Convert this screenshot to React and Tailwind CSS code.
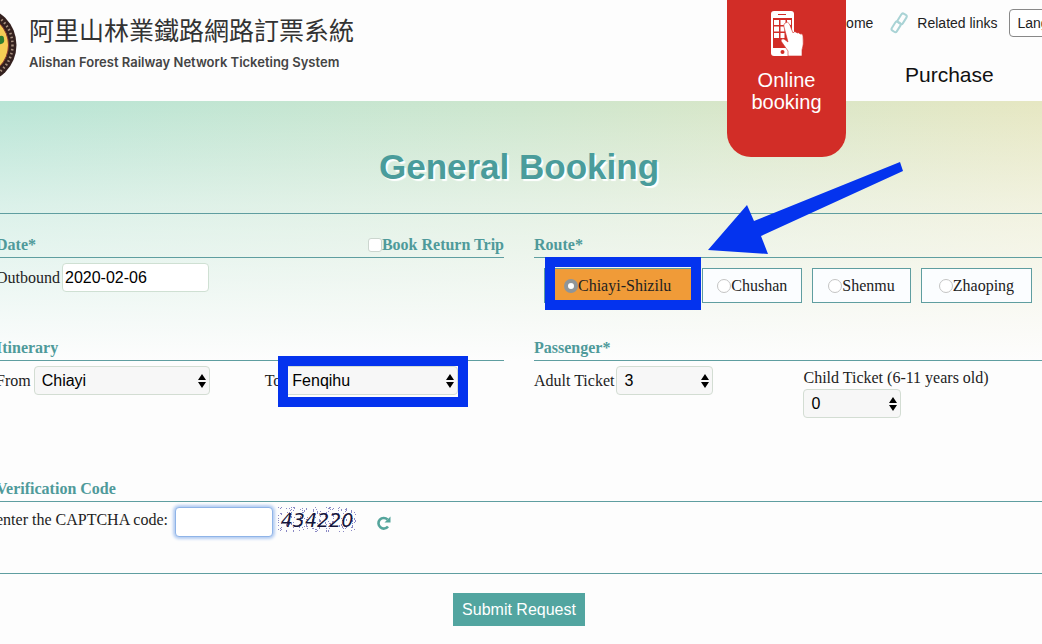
import { useState } from 'react';

const serif = "font-['Liberation_Serif','Noto_Sans_CJK_TC',serif]";
const routes = [
  { name: 'Chiayi-Shizilu', cls: 'pl-[19px] pr-5' },
  { name: 'Chushan', cls: 'px-[14px]' },
  { name: 'Shenmu', cls: 'px-[15px]' },
  { name: 'Zhaoping', cls: 'px-[17px]' },
];

// deterministic speckles behind the captcha digits
const dots = Array.from({ length: 260 }, (_, i) => ({
  x: (i * 37 + ((i * i) % 13)) % 78,
  y: (i * 17 + ((i * i * 7) % 11)) % 25,
}));

function Section({ title, extra, children }) {
  return (
    <section>
      <div className="flex justify-between border-b border-[#5f9ea0] pb-[2px] text-[16px] leading-5 font-bold text-[#4f9a9a]">
        <h2>{title}</h2>
        {extra}
      </div>
      {children}
    </section>
  );
}

function Select({ id, options, className }) {
  return (
    <span className={`relative inline-flex ${className}`}>
      <select id={id} className="h-[29px] w-full appearance-none rounded-[4px] border border-[#d3ddd3] bg-[#f7f7f7] pl-[7px] font-['Liberation_Sans',sans-serif] text-[16px] leading-5 text-black">
        {options.map((o) => <option key={o}>{o}</option>)}
      </select>
      <svg viewBox="0 0 8 14" className="pointer-events-none absolute top-2 right-1 h-[14px] w-2 fill-black">
        <path d="M4 0 8 6H0zM4 14 0 8h8z" />
      </svg>
    </span>
  );
}

function Emblem() {
  return (
    <svg viewBox="0 0 78 78" className="size-[78px] shrink-0">
      <circle cx="39" cy="39" r="38.500" fill="#34211f" />
      <circle cx="39" cy="39" r="34.500" fill="none" stroke="#a8917f" strokeWidth="2.500" strokeDasharray="1.500 2.500" />
      <circle cx="39" cy="39" r="30.500" fill="#f5cd55" stroke="#8d3a2c" strokeWidth="1" />
      <path d="M56 32q2-4 5-2 4-1 4 3 1 4-3 5-5 1-6-2z" fill="#2f7d2f" />
    </svg>
  );
}

function PhoneIcon() {
  return (
    <svg viewBox="0 0 34 48" className="h-12 w-[34px]">
      <rect x="1" y="1" width="23" height="45" rx="3" fill="#fff" />
      <path d="M8 4.500h8" stroke="#d22d27" strokeWidth="1" />
      <path d="M3 8h19v30H3z" fill="#d22d27" />
      <path d="M4 10h5v5H4zM10.500 10h5v5h-5zM17 10h4v5h-4zM4 16.500h5v5H4zM10.500 16.500h4v5h-4zM4 23h5v5H4zM10.500 23h4v5h-4z" fill="#fff" />
      <circle cx="12.500" cy="42" r="2" fill="#d22d27" />
      <path d="M15 13q3-2 4.500 1l3.500 9q1-2 3-1l1 1q2-1 3 1 3-1 3 2 1 9-1 14v6H18v-5l-7-10q0-3 3-2l4 3-4-15q-1-2 1-4z" fill="#fff" stroke="#d22d27" strokeWidth=".6" />
    </svg>
  );
}

function LinkIcon() {
  return (
    <svg viewBox="0 0 20 22" className="h-[22px] w-5" fill="none" stroke="#a9d3d5" strokeWidth="2">
      <rect x="10" y="1.500" width="6" height="10.500" rx="2" transform="rotate(32 13 7)" />
      <rect x="4" y="9.500" width="6" height="10.500" rx="2" transform="rotate(32 7 15)" />
    </svg>
  );
}

export default function App() {
  const [route, setRoute] = useState('Chiayi-Shizilu');
  return (
    <div className="relative min-h-screen overflow-hidden bg-[#fdfdfd] font-['Liberation_Sans','Noto_Sans_CJK_TC',sans-serif] text-[#222]">
      <header className="flex h-[101px] items-start justify-between">
        <div className="-ml-[61px] flex items-start gap-3 pt-[6px]">
          <Emblem />
          <div className="pt-[6px]">
            <h1 className="font-['Noto_Sans_CJK_TC',sans-serif] text-[25px] leading-[34px] whitespace-nowrap text-[#333]">阿里山林業鐵路網路訂票系統</h1>
            <p className="pt-1 font-[Inter,sans-serif] text-[13px] leading-6 font-semibold whitespace-nowrap text-[#444]">Alishan Forest Railway Network Ticketing System</p>
          </div>
        </div>
        <nav className="relative flex w-[315px] shrink-0 flex-col">
          <div className="flex items-center pt-[9px] pl-[109px] text-[14px] leading-5 whitespace-nowrap">
            <a href="#home">Home</a>
            <a href="#links" className="ml-4 flex items-center gap-2"><LinkIcon />Related links</a>
            <button type="button" className="ml-[11px] h-7 rounded-[4px] border border-[#888] bg-white px-2">Language</button>
          </div>
          <a href="#purchase" className="mt-6 ml-[178px] text-[21px] leading-7 text-[#111]">Purchase</a>
          <a href="#booking" className="absolute top-0 left-0 z-10 flex h-[157px] w-[119px] flex-col items-center rounded-b-[24px] bg-[#d22d27] pt-[10px] text-center text-[20px] leading-[22px] text-white">
            <PhoneIcon />
            <span className="mt-[11px]">Online<br />booking</span>
          </a>
        </nav>
      </header>

      <div className="relative">
        <div className="absolute inset-x-0 top-0 h-[260px] bg-linear-to-r from-[#b9e5d6] via-[#cde6cd] to-[#e6e7c2]">
          <div className="h-full bg-linear-to-b from-transparent via-[#fdfdfd]/50 via-40% to-[#fdfdfd]" />
        </div>
        <div className="relative -ml-1">
          <div className="border-b border-[#5f9ea0] pt-11 pb-6">
            <h2 className="text-center text-[35px] leading-[44px] font-bold text-[#4a9c9b] [text-shadow:2px_2px_1px_#fff]">General Booking</h2>
          </div>

          <form className={`pt-[21px] text-[16px] leading-5 ${serif}`} onSubmit={(e) => e.preventDefault()}>
            <div className="grid grid-cols-2 gap-x-[30px]">
              <Section
                title="Date*"
                extra={<label className="flex items-center"><input type="checkbox" className="size-[14px] appearance-none rounded-[3px] border border-[#ccd6cf] bg-white" />Book Return Trip</label>}
              >
                <div className="flex h-20 items-start gap-[2px] pt-[5px]">
                  <label htmlFor="outbound" className="pt-[5px]">Outbound</label>
                  <input id="outbound" defaultValue="2020-02-06" className="h-[29px] w-[147px] rounded-[4px] border border-[#cfe0d3] bg-white px-[2px] font-['Liberation_Sans',sans-serif] text-black" />
                </div>
              </Section>
              <Section title="Route*">
                <div className="flex h-20 items-start gap-[10px] pt-[10px] pl-[10px]">
                  {routes.map((r) => (
                    <label key={r.name} className={`relative flex h-[35px] items-center border border-[#5f9ea0] whitespace-nowrap ${r.cls} ${route === r.name ? 'bg-[#f09b38]' : 'bg-[#fbfdff]'}`}>
                      <input type="radio" name="route" checked={route === r.name} onChange={() => setRoute(r.name)} className="size-[14px] shrink-0 appearance-none rounded-full border border-[#c4c4c4] bg-white checked:border-4 checked:border-[#8f9599]" />
                      {r.name}
                      {r.name === 'Chiayi-Shizilu' && <span className="pointer-events-none absolute -top-3 -right-[10px] -bottom-2 left-0 border-10 border-[#0433ee]" />}
                    </label>
                  ))}
                </div>
              </Section>
              <Section title="Itinerary">
                <div className="flex h-[118px] items-start gap-[3px] pt-[5px]">
                  <label htmlFor="from" className="pt-[5px]">From</label>
                  <Select id="from" className="w-[176px]" options={['Chiayi', 'Fenqihu']} />
                  <label htmlFor="to" className="ml-[52px] pt-[5px]">To</label>
                  <span className="relative">
                    <Select id="to" className="w-[174px]" options={['Fenqihu', 'Chiayi']} />
                    <span className="pointer-events-none absolute -top-[10px] -right-[10px] -bottom-[12px] -left-[6px] border-10 border-[#0433ee]" />
                  </span>
                </div>
              </Section>
              <Section title="Passenger*">
                <div className="flex h-[118px] items-start pt-[5px]">
                  <label htmlFor="adult" className="pt-[5px]">Adult Ticket</label>
                  <Select id="adult" className="ml-[2px] w-[97px]" options={['3', '1', '2']} />
                  <div className="ml-[90px] flex flex-col items-start gap-px pt-[2px]">
                    <label htmlFor="child">Child Ticket (6-11 years old)</label>
                    <Select id="child" className="w-[98px]" options={['0', '1', '2']} />
                  </div>
                </div>
              </Section>
            </div>

            <Section title="Verification Code">
              <div className="flex h-[72px] items-start border-b border-[#5f9ea0] pt-[5px]">
                <label htmlFor="captcha" className="pt-[3px]">enter the CAPTCHA code:</label>
                <input id="captcha" className="ml-[7px] h-[30px] w-[98px] rounded-[4px] border border-[#8fb4e8] bg-white px-1 shadow-[0_0_3px_2px_#b4cdf2]" />
                <span className="relative ml-[5px] inline-flex h-[26px] w-[78px] items-center justify-center">
                  <svg viewBox="0 0 78 26" className="absolute inset-0 fill-[#8a88c4]">
                    {dots.map((d, i) => <rect key={i} x={d.x} y={d.y} width="1" height="1" />)}
                  </svg>
                  <span className="relative font-['DejaVu_Sans',sans-serif] text-[19px] leading-6 text-[#16163c] italic">434220</span>
                </span>
                <button type="button" aria-label="Refresh code" className="mt-2 ml-5">
                  <svg viewBox="0 0 15 15" className="size-[15px]" fill="none" stroke="#55a59c" strokeWidth="2.600">
                    <path d="M12 11.500A5.300 5.300 0 1 1 11.500 4.500" />
                    <path d="M14.500 1.500v6H8.500z" fill="#55a59c" stroke="none" />
                  </svg>
                </button>
              </div>
            </Section>
            <div className="flex justify-center pt-[19px]">
              <button type="submit" className="h-[33px] bg-[#52a5a0] px-[9px] font-['Liberation_Sans',sans-serif] text-white">Submit Request</button>
            </div>
          </form>
        </div>
      </div>

      {/* pointer to the selected route */}
      <svg viewBox="0 0 196 92" className="pointer-events-none absolute top-[162px] left-[708px] z-20 h-[92px] w-[196px] fill-[#0433ee]">
        <path d="M0 88 39 43 46 59 192 0 195 9 53 74 60 92z" />
      </svg>
    </div>
  );
}
